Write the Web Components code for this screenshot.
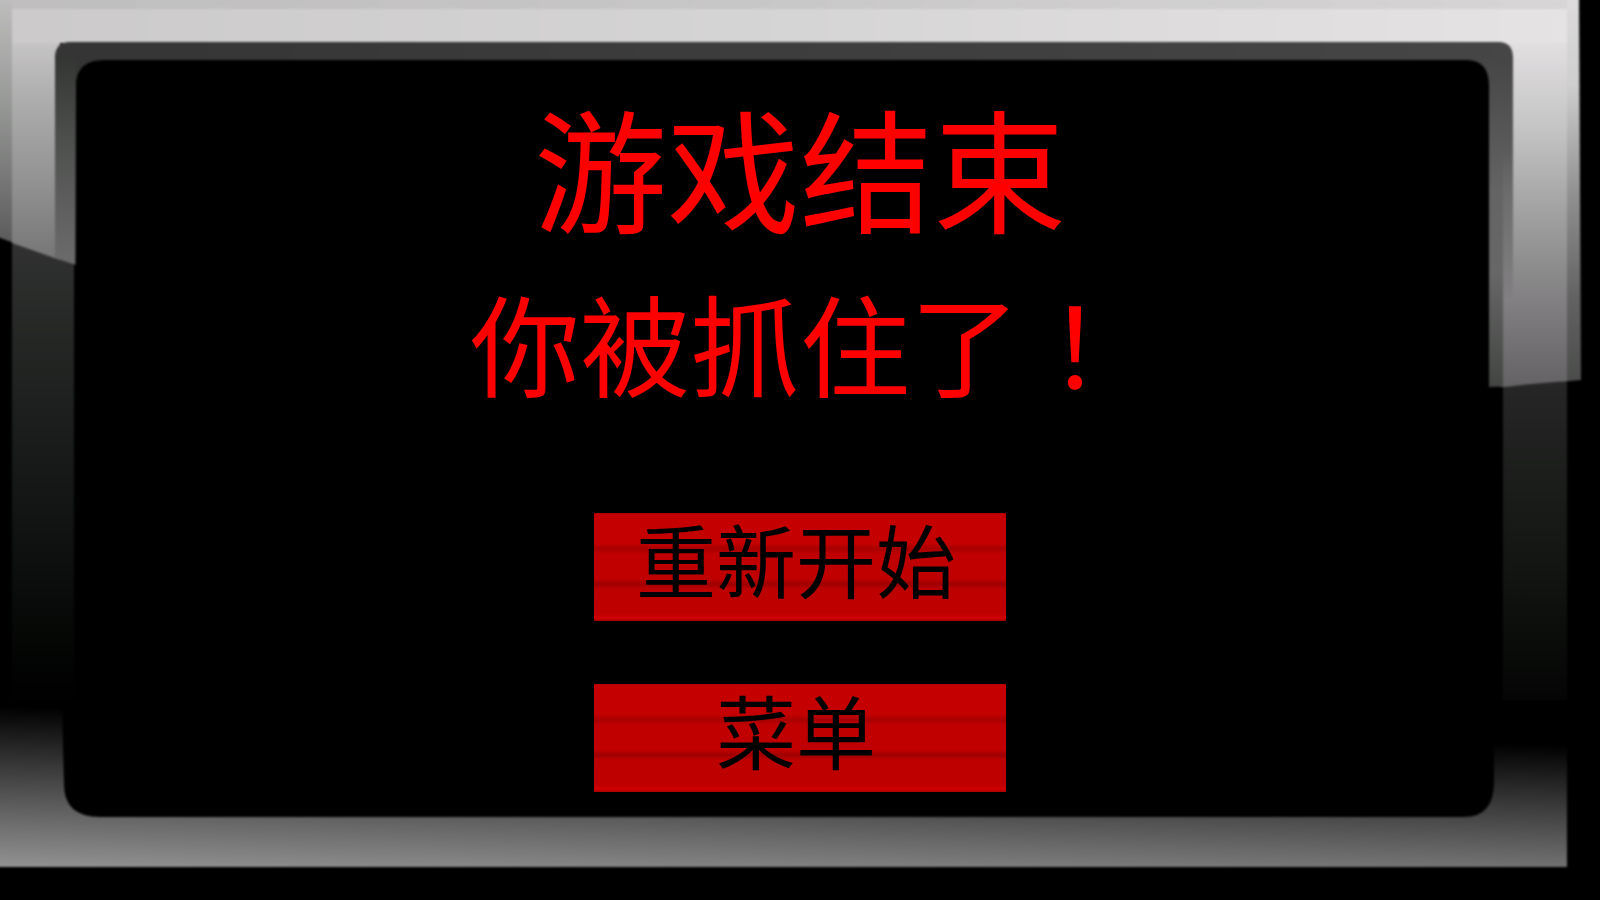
<!DOCTYPE html>
<html lang="zh-CN">
<head>
<meta charset="utf-8">
<title>游戏结束</title>
<style>
  html, body { margin: 0; min-height: 100%; background: #000; }
  body { font-family: "Noto Sans CJK SC", "Noto Sans", sans-serif; }
</style>
</head>
<body>
<game-over-screen>
  <monitor-frame slot="frame"></monitor-frame>
  <result-message slot="message">
    <span slot="title">游戏结束</span>
    <span slot="reason">你被抓住了</span>
  </result-message>
  <plank-button slot="actions">重新开始</plank-button>
  <plank-button slot="actions">菜单</plank-button>
</game-over-screen>

<script>
const define = (name, html) => {
  const template = document.createElement('template');
  template.innerHTML = html;
  customElements.define(name, class extends HTMLElement {
    constructor() {
      super();
      this.attachShadow({ mode: 'open' }).append(template.content.cloneNode(true));
    }
  });
};

define('monitor-frame', `
  <style>
    :host { display: block; position: absolute; inset: 0; overflow: hidden; }
    svg { display: block; width: 100%; height: 100%; }
  </style>
  <svg viewBox="0 0 1600 900" preserveAspectRatio="none" aria-hidden="true">
    <defs>
      <linearGradient id="top" x1="0" x2="1" y1="0" y2="0">
        <stop offset="0" stop-color="#cccacb"/><stop offset=".5" stop-color="#d6d5d5"/><stop offset="1" stop-color="#e6e3e5"/>
      </linearGradient>
      <linearGradient id="left" gradientUnits="userSpaceOnUse" x1="0" x2="0" y1="36" y2="265">
        <stop offset="0" stop-color="#c9c7c8"/><stop offset=".28" stop-color="#adadad"/><stop offset=".6" stop-color="#949594"/><stop offset="1" stop-color="#757475"/>
      </linearGradient>
      <linearGradient id="leftEdge" gradientUnits="userSpaceOnUse" x1="0" x2="0" y1="0" y2="245">
        <stop offset="0" stop-color="#bebdbd"/><stop offset=".4" stop-color="#999b99"/><stop offset="1" stop-color="#5a5a5a"/>
      </linearGradient>
      <linearGradient id="right" gradientUnits="userSpaceOnUse" x1="0" x2="0" y1="40" y2="387">
        <stop offset="0" stop-color="#e3e0e2"/><stop offset=".25" stop-color="#c5c5c5"/><stop offset=".5" stop-color="#a0a1a0"/><stop offset=".75" stop-color="#828082"/><stop offset="1" stop-color="#646264"/>
      </linearGradient>
      <linearGradient id="rightEdge" gradientUnits="userSpaceOnUse" x1="0" x2="0" y1="0" y2="383">
        <stop offset="0" stop-color="#dddbdc"/><stop offset=".22" stop-color="#cfcfcf"/><stop offset=".5" stop-color="#929292"/><stop offset=".78" stop-color="#626262"/><stop offset="1" stop-color="#4a4c4a"/>
      </linearGradient>
      <linearGradient id="bezelTop" x1="0" x2="1" y1="0" y2="0">
        <stop offset="0" stop-color="#343534"/><stop offset="1" stop-color="#454645"/>
      </linearGradient>
      <linearGradient id="bezelLeft" gradientUnits="userSpaceOnUse" x1="0" x2="0" y1="60" y2="265">
        <stop offset="0" stop-color="#353735"/><stop offset=".4" stop-color="#4e504e"/><stop offset="1" stop-color="#6c6c6c"/>
      </linearGradient>
      <linearGradient id="bezelRight" gradientUnits="userSpaceOnUse" x1="0" x2="0" y1="60" y2="387">
        <stop offset="0" stop-color="#454645"/><stop offset=".4" stop-color="#646464"/><stop offset=".65" stop-color="#666766"/><stop offset="1" stop-color="#434543"/>
      </linearGradient>
      <linearGradient id="blend" gradientUnits="userSpaceOnUse" x1="0" x2="0" y1="150" y2="300">
        <stop offset="0" stop-color="#828082" stop-opacity="0"/><stop offset="1" stop-color="#828082"/>
      </linearGradient>
      <linearGradient id="lowerLeft" gradientUnits="userSpaceOnUse" x1="0" x2="0" y1="245" y2="690">
        <stop offset="0" stop-color="#303130"/><stop offset=".4" stop-color="#1b1e1c"/><stop offset=".75" stop-color="#0b0e0c"/><stop offset="1" stop-color="#000100"/>
      </linearGradient>
      <linearGradient id="lowerRight" gradientUnits="userSpaceOnUse" x1="0" x2="0" y1="384" y2="735">
        <stop offset="0" stop-color="#252625"/><stop offset=".5" stop-color="#141614"/><stop offset="1" stop-color="#000100"/>
      </linearGradient>
      <linearGradient id="base" gradientUnits="userSpaceOnUse" x1="0" x2="-4" y1="706" y2="867">
        <stop offset="0" stop-color="#000"/><stop offset=".4" stop-color="#3c3d3c"/><stop offset=".7" stop-color="#696969"/><stop offset="1" stop-color="#929292"/>
      </linearGradient>
      <filter id="soft" x="-2%" y="-2%" width="104%" height="104%" color-interpolation-filters="sRGB"><feGaussianBlur stdDeviation="1"/></filter>
    </defs>
    <rect width="1600" height="900"/>
    <g filter="url(#soft)">
      <path fill="url(#lowerLeft)" d="M12 230H74V700H12Z"/>
      <path fill="url(#lowerRight)" d="M1503 370H1567V740H1503Z"/>
      <path fill="url(#base)" d="M-8 700H1567V867H-8Z"/>
      <path fill="url(#leftEdge)" d="M-8-8H14V243L-8 235Z"/>
      <path fill="url(#left)" d="M12 9H60V260L12 243Z"/>
      <path fill="url(#rightEdge)" d="M1560-8H1579L1581 380L1560 382Z"/>
      <path fill="url(#right)" d="M1500 9H1567V381L1500 387Z"/>
      <path fill="url(#top)" d="M12-8H1567V43H12Z"/>
      <path fill="#000" opacity=".06" d="M12-8H1567V9H12Z"/>
      <path fill="url(#bezelTop)" d="M55 56Q56 42 70 42H1500Q1513 43 1513 58V80H55Z"/>
      <path fill="url(#bezelLeft)" d="M55 60H76V265L55 258Z"/>
      <path fill="url(#bezelRight)" d="M1486 60H1513V386L1488 387Z"/>
      <path fill="url(#blend)" d="M1503 150H1513V300H1503Z"/>
      <path fill="url(#right)" d="M1503 300H1515V386L1503 387Z"/>
      <path fill="#000" d="M76 84Q77 60 104 60H1468Q1489 61 1489 86V387H1503V735H1494V782Q1494 817 1464 817H100Q64 817 64 784L62 705H74Z"/>
    </g>
  </svg>
`);

define('result-message', `
  <style>
    :host { display: block; text-align: center; color: #f00; }
    h1, p { margin: 0; font-weight: 400; white-space: nowrap; }
    h1 { font-size: 133px; line-height: 134px; }
    p { margin-top: 54px; font-size: 110px; line-height: 110px; }
    .mark { font-family: "Noto Sans CJK TC", "Noto Sans CJK SC", sans-serif; }
  </style>
  <h1><slot name="title"></slot></h1>
  <p><slot name="reason"></slot><span class="mark" lang="zh-TW">！</span></p>
`);

define('plank-button', `
  <style>
    :host { display: block; width: 412px; }
    button {
      display: block; width: 100%; height: 108px; margin: 0; padding: 0 8px 20px 0;
      border: 0; border-radius: 1px; cursor: pointer;
      font: inherit; font-size: 80px; line-height: 80px; color: #000;
      background: linear-gradient(#b00000 0, #c60000 2px, #c40000 30px, #a80000 36px, #c00000 41px,
        #c00000 66px, #9e0000 71px, #bd0000 76px, #be0000 101px, #d20000 105px, #a80000 108px);
    }
    button:focus-visible { outline: 3px solid #f00; outline-offset: 4px; }
  </style>
  <button type="button"><slot></slot></button>
`);

define('game-over-screen', `
  <style>
    :host { display: block; position: relative; min-height: 100vh; overflow: hidden; }
    main {
      position: relative; box-sizing: border-box; min-height: 100vh; padding: 98px 76px 108px;
      display: flex; flex-direction: column; align-items: center;
    }
    nav { display: flex; flex-direction: column; gap: 63px; margin-top: 117px; }
  </style>
  <slot name="frame"></slot>
  <main>
    <slot name="message"></slot>
    <nav aria-label="游戏选项"><slot name="actions"></slot></nav>
  </main>
`);
</script>
</body>
</html>
